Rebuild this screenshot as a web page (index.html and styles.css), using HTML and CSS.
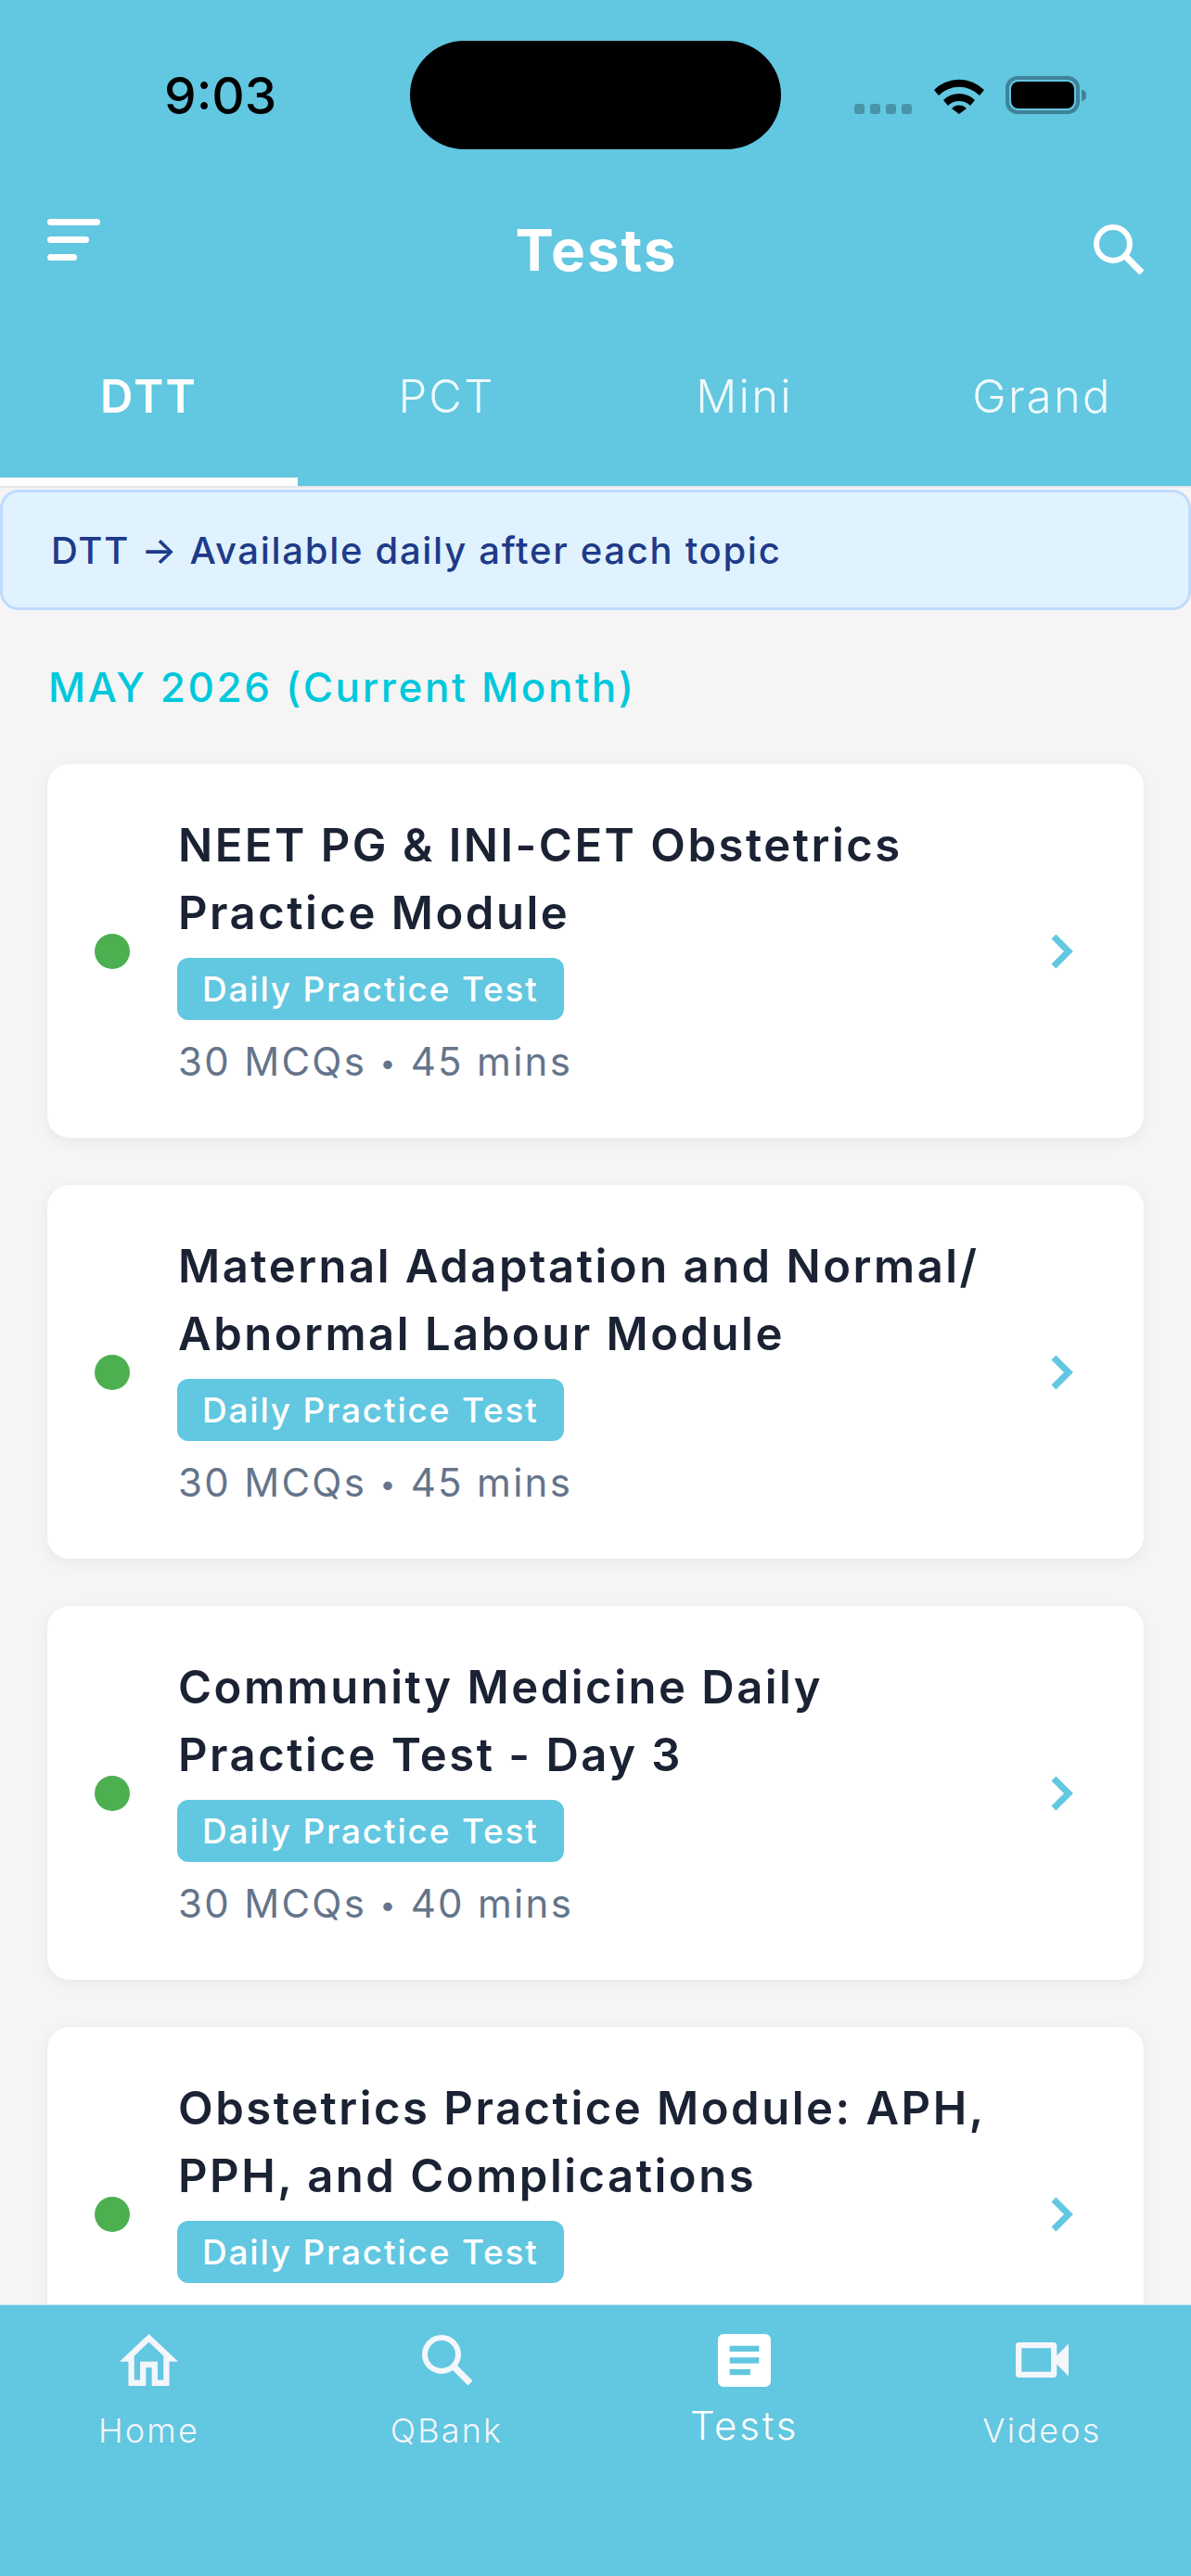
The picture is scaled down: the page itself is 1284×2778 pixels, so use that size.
FILE: index.html
```html
<!DOCTYPE html>
<html lang="en">
<head>
  <meta charset="UTF-8">
  <meta name="viewport" content="width=device-width, initial-scale=1.0">
  <title>Tests</title>
  <link rel="stylesheet" href="styles.css">
</head>
<body>
  <div class="phone">
    <header class="top">
      <div class="status">
        <span class="time">9:03</span>
        <div class="island"></div>
        <div class="status-icons">
          <div class="signal"><i></i><i></i><i></i><i></i></div>
          <svg class="wifi" width="54" height="40" viewBox="0 0 54 40">
            <path d="M0 14 A38 38 0 0 1 54 14 L49 20 A31 31 0 0 0 5 20 Z M10 25 A24 24 0 0 1 44 25 L39 31 A17 17 0 0 0 15 31 Z M19 34 A11 11 0 0 1 35 34 L27 40 Z"/>
          </svg>
          <div class="battery"><div class="battery-fill"></div></div>
          <div class="battery-cap"></div>
        </div>
      </div>

      <div class="title-bar">
        <div class="menu-icon"><i class="l1"></i><i class="l2"></i><i class="l3"></i></div>
        <h1>Tests</h1>
        <svg class="search-icon" width="56" height="56" viewBox="0 0 56 56" fill="none" stroke="#fff" stroke-width="6">
          <circle cx="22" cy="22" r="18"/>
          <path d="M36 36 L53 53" stroke-width="7"/>
        </svg>
      </div>

      <nav class="tabs">
        <a class="tab active">DTT</a>
        <a class="tab">PCT</a>
        <a class="tab">Mini</a>
        <a class="tab">Grand</a>
      </nav>
    </header>

    <main class="content">
      <div class="banner">DTT → Available daily after each topic</div>
      <h2 class="month">MAY 2026 (Current Month)</h2>

      <div class="card">
        <span class="dot"></span>
        <div class="card-body">
          <h3>NEET PG &amp; INI-CET Obstetrics<br>Practice Module</h3>
          <span class="tag">Daily Practice Test</span>
          <p class="meta">30 MCQs <span class="sep">•</span> 45 mins</p>
        </div>
        <svg class="chevron" width="26" height="38" viewBox="0 0 26 38"><path d="M3 3 L19 19 L3 35"/></svg>
      </div>

      <div class="card">
        <span class="dot"></span>
        <div class="card-body">
          <h3>Maternal Adaptation and Normal/<br>Abnormal Labour Module</h3>
          <span class="tag">Daily Practice Test</span>
          <p class="meta">30 MCQs <span class="sep">•</span> 45 mins</p>
        </div>
        <svg class="chevron" width="26" height="38" viewBox="0 0 26 38"><path d="M3 3 L19 19 L3 35"/></svg>
      </div>

      <div class="card">
        <span class="dot"></span>
        <div class="card-body">
          <h3>Community Medicine Daily<br>Practice Test - Day 3</h3>
          <span class="tag">Daily Practice Test</span>
          <p class="meta">30 MCQs <span class="sep">•</span> 40 mins</p>
        </div>
        <svg class="chevron" width="26" height="38" viewBox="0 0 26 38"><path d="M3 3 L19 19 L3 35"/></svg>
      </div>

      <div class="card">
        <span class="dot"></span>
        <div class="card-body">
          <h3>Obstetrics Practice Module: APH,<br>PPH, and Complications</h3>
          <span class="tag">Daily Practice Test</span>
          <p class="meta">30 MCQs <span class="sep">•</span> 45 mins</p>
        </div>
        <svg class="chevron" width="26" height="38" viewBox="0 0 26 38"><path d="M3 3 L19 19 L3 35"/></svg>
      </div>
    </main>

    <footer class="bottom-nav">
      <a class="nav-item">
        <svg width="63" height="55" viewBox="2 3 20 17" preserveAspectRatio="none" fill="#f3f6fb">
          <path d="M12 5.69l5 4.5V18h-2v-6H9v6H7v-7.81l5-4.5M12 3L2 12h3v8h6v-6h2v6h6v-8h3L12 3z"/>
        </svg>
        <span>Home</span>
      </a>
      <a class="nav-item">
        <svg width="56" height="56" viewBox="0 0 56 56" fill="none" stroke="#f3f6fb" stroke-width="6">
          <circle cx="22" cy="22" r="18"/>
          <path d="M36 36 L53 53" stroke-width="7"/>
        </svg>
        <span>QBank</span>
      </a>
      <a class="nav-item current">
        <svg width="57" height="57" viewBox="3 3 18 18" fill="#fff">
          <path d="M19 3H5c-1.1 0-2 .9-2 2v14c0 1.1.9 2 2 2h14c1.100 0 2-.9 2-2V5c0-1.100-.9-2-2-2zm-5 14H7v-2h7v2zm3-4H7v-2h10v2zm0-4H7V7h10v2z"/>
        </svg>
        <span>Tests</span>
      </a>
      <a class="nav-item">
        <svg class="video-icon" width="57" height="38" viewBox="3 6 18 12" fill="#f3f6fb">
          <path d="M15 8v8H5V8h10m1-2H4c-.55 0-1 .45-1 1v10c0 .55.45 1 1 1h12c.55 0 1-.45 1-1v-3.500l4 4v-11l-4 4V7c0-.55-.45-1-1-1z"/>
        </svg>
        <span>Videos</span>
      </a>
    </footer>
  </div>
</body>
</html>
```

FILE: styles.css
```css
* {
  box-sizing: border-box;
}
body {
  margin: 0;
  font-family: Inter, "Liberation Sans", sans-serif;
}
.phone {
  width: 1284px;
  height: 2778px;
  display: flex;
  flex-direction: column;
  overflow: hidden;
  background-color: #f5f5f5;
}

/* header */
.top {
  height: 524px;
  flex-shrink: 0;
  background-color: #62c7e0;
}
.status {
  height: 204px;
  padding-top: 44px;
  display: flex;
  align-items: flex-start;
}
.time {
  width: 442px;
  padding: 28px 0 0 177px;
  font-size: 55px;
  line-height: 62px;
  font-weight: 500;
  color: #000;
}
.island {
  width: 400px;
  height: 117px;
  background-color: #000;
  border-radius: 59px;
}
.status-icons {
  display: flex;
  align-items: flex-start;
  padding: 38px 0 0 79px;
}
.signal {
  display: flex;
  gap: 6px;
  margin-top: 30px;
  margin-right: 24px;
}
.signal i {
  width: 11px;
  height: 11px;
  border-radius: 3px;
  background-color: rgba(0, 0, 0, 0.25);
}
.wifi {
  margin-top: 1px;
  margin-right: 23px;
}
.battery {
  width: 80px;
  height: 41px;
  border: 4px solid #3f8398;
  border-radius: 13px;
  padding: 2px;
}
.battery-fill {
  height: 100%;
  background-color: #000;
  border-radius: 8px;
}
.battery-cap {
  width: 5px;
  height: 12px;
  margin: 15px 0 0 2px;
  background-color: #3f8398;
  border-radius: 0 6px 6px 0;
}
.title-bar {
  height: 130px;
  padding: 0 50px 0 51px;
  display: flex;
  align-items: center;
  justify-content: space-between;
}
.menu-icon {
  width: 57px;
  margin-bottom: 21px;
  display: flex;
  flex-direction: column;
  gap: 12px;
}
.menu-icon i {
  height: 7px;
  background-color: #fff;
  border-radius: 4px;
}
.menu-icon .l2 {
  width: 45px;
}
.menu-icon .l3 {
  width: 32px;
}
h1 {
  margin: 0;
  font-size: 62px;
  font-weight: 700;
  color: #fff;
  letter-spacing: 2px;
}
.tabs {
  height: 190px;
  display: flex;
}
.tab {
  width: 321px;
  height: 190px;
  padding-top: 64px;
  text-align: center;
  font-size: 49px;
  line-height: 60px;
  letter-spacing: 2.2px;
  font-weight: 300;
  color: rgba(255, 255, 255, 0.9);
}
.tab.active {
  font-weight: 600;
  color: #fff;
  border-bottom: 9px solid #fff;
}

/* list */
.content {
  flex: 1;
  min-height: 0;
  overflow: hidden;
  border-top: 2px solid #e4e7e9;
}
.banner {
  height: 130px;
  margin-top: 2px;
  padding-left: 52px;
  display: flex;
  align-items: center;
  font-size: 40px;
  font-weight: 450;
  letter-spacing: 1.7px;
  color: #1e3a8a;
  background-color: #e0f2fe;
  border: 3px solid #bfdbfe;
  border-radius: 20px;
}
.month {
  margin: 55px 0 55px 52px;
  font-size: 44px;
  line-height: 56px;
  font-weight: 500;
  letter-spacing: 2.6px;
  color: #00c8dc;
}
.card {
  height: 403px;
  margin: 0 51px 51px;
  padding: 0 74px 0 51px;
  display: flex;
  align-items: center;
  background-color: #fff;
  border-radius: 24px;
  box-shadow: 0 4px 16px rgba(0, 0, 0, 0.06);
}
.dot {
  width: 38px;
  height: 38px;
  flex-shrink: 0;
  margin-right: 52px;
  border-radius: 50%;
  background-color: #4caf50;
}
.card-body {
  flex: 1;
}
h3 {
  margin: 0;
  font-size: 49px;
  line-height: 73px;
  font-weight: 580;
  letter-spacing: 2.5px;
  color: #1a2233;
}
.tag {
  display: block;
  width: fit-content;
  height: 67px;
  margin: 12px 0 0 -1px;
  padding: 0 27px;
  font-size: 37px;
  line-height: 67px;
  font-weight: 500;
  letter-spacing: 1.8px;
  color: #fff;
  background-color: #62c7e0;
  border-radius: 12px;
}
.meta {
  margin: 17px 0 3px;
  font-size: 42px;
  line-height: 56px;
  letter-spacing: 2.3px;
  color: #64748b;
}
.sep {
  font-size: 30px;
  vertical-align: 3px;
}
.chevron {
  flex-shrink: 0;
  fill: none;
  stroke: #62c7e0;
  stroke-width: 7;
}

/* bottom nav */
.bottom-nav {
  height: 293px;
  flex-shrink: 0;
  display: flex;
  padding-top: 31px;
  background-color: #62c7e0;
  border-top: 1px solid #c5e8f1;
  position: relative;
}
.nav-item {
  width: 321px;
  display: flex;
  flex-direction: column;
  align-items: center;
  gap: 25px;
  font-size: 36px;
  letter-spacing: 2.2px;
  font-weight: 300;
  color: #f3f6fb;
}
.nav-item svg {
  height: 56px;
}
.nav-item.current svg {
  height: 57px;
}
.nav-item span {
  line-height: 46px;
}
.nav-item.current {
  gap: 19px;
  font-size: 42px;
  letter-spacing: 2.8px;
  color: #fff;
}
```
